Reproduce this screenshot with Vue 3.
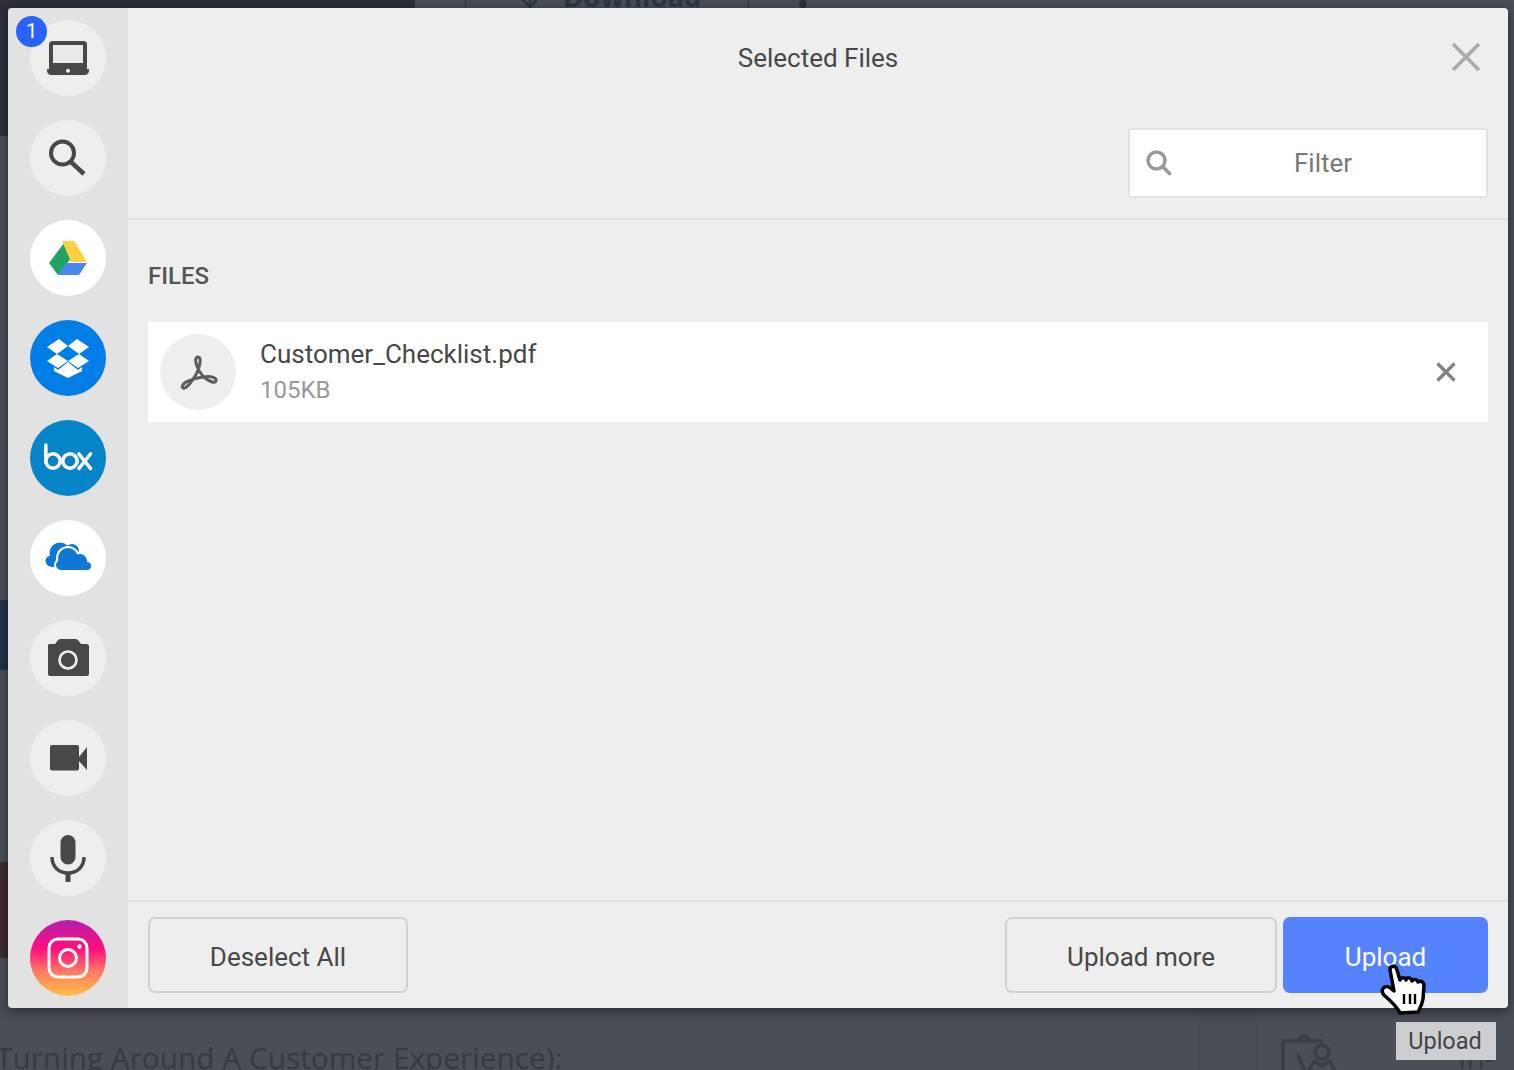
<script setup>
const file = { name: 'Customer_Checklist.pdf', size: '105KB' }
</script>

<template>
  <div class="page">
    <div class="backdrop" aria-hidden="true">
      <div class="bg-top-dark"></div>
      <div class="bg-left-mid"></div>
      <div class="bg-left-blue"></div>
      <div class="bg-left-red"></div>
      <div class="bg-panel"></div>
      <i class="bg-rule r1"></i>
      <i class="bg-rule r2"></i>
      <i class="bg-dot"></i>
      <svg class="bg-arrow" viewBox="0 0 16 8" fill="none" stroke="#2c3644" stroke-width="2.400">
        <path d="M8 0v8M1 0l7 7 7-7" />
      </svg>
      <span class="bg-download">Download</span>
      <span class="bg-headline">Turning Around A Customer Experience):</span>
      <span class="bg-incl">In-Cl</span>
      <svg class="bg-clip" viewBox="0 0 70 50" fill="none" stroke="#3a3e47" stroke-width="3.600">
        <path d="M3 40V11h40M17 23l8 18M20 9.500a4 4 0 1 1 8 0" />
        <circle cx="42" cy="22" r="7" />
        <path d="M28 42l6-11M56 42l-6-11M34 31l8 5 8-5" />
      </svg>
    </div>

    <div class="modal">
      <aside class="rail">
        <span class="badge">1</span>

        <button class="src">
          <svg viewBox="0 0 76 76">
            <rect x="19" y="21" width="38" height="30" rx="3.500" fill="#484848" />
            <rect x="23" y="25" width="30" height="18" fill="#eaeaea" />
            <path d="M17 49h42v2c0 2-2 4-4 4H21c-2 0-4-2-4-4z" fill="#484848" />
            <circle cx="38" cy="50.700" r="2" fill="#eee" />
          </svg>
        </button>

        <button class="src">
          <svg viewBox="0 0 76 76" fill="none" stroke="#484848">
            <circle cx="32.500" cy="33" r="11.500" stroke-width="4" />
            <path d="M41 42l13 12" stroke-width="4.500" />
          </svg>
        </button>

        <button class="src white">
          <svg viewBox="0 0 76 76">
            <path d="M19 43 34 23l8 14-14 18z" fill="#1ea362" />
            <path d="M32 21h12l13 21H41z" fill="#ffcf43" />
            <path d="M28 55l8-12h21l-8 12z" fill="#4a88f0" />
          </svg>
        </button>

        <button class="src dropbox">
          <svg viewBox="0 0 76 76" fill="#fff">
            <path d="M17 27 29 19 38 26 27 34z" />
            <path d="M59 27 47 19 38 26 49 34z" />
            <path d="M17 41 27 34 38 41 28 48z" />
            <path d="M59 41 49 34 38 41 48 48z" />
            <path d="M38 42 28 50 24 47v4l14 7 14-7v-4l-4 3z" />
          </svg>
        </button>

        <button class="src box">
          <svg viewBox="0 0 76 76" fill="none" stroke="#fff" stroke-width="3.600" stroke-linecap="round">
            <path d="M15.800 25v16" />
            <circle cx="23" cy="41" r="7.200" />
            <circle cx="40" cy="41" r="7.200" />
            <path d="M49 34l11.500 14.500M60.500 34 49 48.500" />
          </svg>
        </button>

        <button class="src white">
          <svg viewBox="0 0 76 76">
            <g fill="#0f78d4">
              <circle cx="30" cy="33" r="10.500" />
              <circle cx="21" cy="41" r="5.500" />
              <circle cx="42" cy="31" r="7" />
              <rect x="21" y="36" width="22" height="11" />
            </g>
            <g fill="#fff" stroke="#fff" stroke-width="4">
              <circle cx="38" cy="38" r="10" />
              <circle cx="31" cy="45" r="5" />
              <circle cx="50" cy="41" r="7" />
              <circle cx="57" cy="46" r="4" />
              <rect x="31" y="40" width="26" height="10" />
            </g>
            <g fill="#0f78d4">
              <circle cx="38" cy="38" r="10" />
              <circle cx="31" cy="45" r="5" />
              <circle cx="50" cy="41" r="7" />
              <circle cx="57" cy="46" r="4" />
              <rect x="31" y="40" width="26" height="10" />
            </g>
          </svg>
        </button>

        <button class="src">
          <svg viewBox="0 0 76 76">
            <path d="M19 24h6l3-4c1-1 2-1 3-1h14c1 0 2 0 3 1l3 4h6c1 0 2 1 2 2v28c0 1-1 2-2 2H20c-1 0-2-1-2-2V26c0-1 0-2 1-2z" fill="#484848" />
            <circle cx="38" cy="40" r="8.500" fill="none" stroke="#eee" stroke-width="2.600" />
          </svg>
        </button>

        <button class="src">
          <svg viewBox="0 0 76 76" fill="#484848">
            <rect x="20" y="25" width="29" height="25.500" rx="2" />
            <path d="M49 37l8-10v23l-8-9z" />
          </svg>
        </button>

        <button class="src">
          <svg viewBox="0 0 76 76" fill="none">
            <rect x="30.500" y="15" width="15" height="29.500" rx="7.500" fill="#484848" />
            <path d="M22 37c0 10 7 16 16 16s16-6 16-16" stroke="#484848" stroke-width="3.500" />
            <rect x="35.500" y="52" width="5" height="10" fill="#484848" />
          </svg>
        </button>

        <button class="src insta">
          <svg viewBox="0 0 76 76" fill="none" stroke="#fff">
            <rect x="19" y="19" width="38" height="38" rx="9" stroke-width="3" />
            <circle cx="38" cy="38" r="8.500" stroke-width="3" />
            <circle cx="49.500" cy="26.500" r="2.200" fill="#fff" stroke="none" />
          </svg>
        </button>
      </aside>

      <main class="panel">
        <header class="head">
          <div class="title-row">
            <span></span>
            <h1 class="title">Selected Files</h1>
            <button class="close" aria-label="Close">
              <svg viewBox="0 0 32 32" fill="none" stroke="#ababab" stroke-width="3.800">
                <path d="M3 3l26 26M29 3 3 29" />
              </svg>
            </button>
          </div>
          <div class="filter-row">
            <label class="filter">
              <svg viewBox="0 0 26 26" fill="none" stroke="#999">
                <circle cx="10.500" cy="10.500" r="8.500" stroke-width="3.400" />
                <path d="M16.500 16.500l7 7" stroke-width="3.800" stroke-linecap="round" />
              </svg>
              <span>Filter</span>
            </label>
          </div>
        </header>

        <section class="body">
          <h2 class="label">FILES</h2>
          <div class="row">
            <span class="thumb">
              <svg viewBox="0 0 76 76" fill="none" stroke="#5c5c5c" stroke-width="3" stroke-linejoin="round">
                <path d="M38 23c-2 0-3 2-2 6 1 5 5 12 9 15 4 3 10 6 11 3 1-4-6-5-12-4-8 1-14 3-18 5-3 2-5 5-3 6 2 1 5-2 8-6 4-5 8-12 9-19 .5-4 0-6-2-6z" />
              </svg>
            </span>
            <div class="meta">
              <div class="name">{{ file.name }}</div>
              <div class="size">{{ file.size }}</div>
            </div>
            <button class="remove" aria-label="Remove">
              <svg viewBox="0 0 20 20" fill="none" stroke="#808080" stroke-width="3.200">
                <path d="M1.500 1.500l17 17M18.500 1.500l-17 17" />
              </svg>
            </button>
          </div>
        </section>

        <footer class="foot">
          <button class="btn deselect">Deselect All</button>
          <div class="actions">
            <button class="btn more">Upload more</button>
            <button class="btn primary">Upload</button>
          </div>
        </footer>
      </main>
    </div>

    <svg class="hand" viewBox="0 0 47 52" aria-hidden="true">
      <path d="M11 6C11 1 17 1 18 6L21 16C22 13 26 13 27 16C28 13 32 13 33 17C34 15 38 15 39 18C42 16 45 18 45 22L44 35C43 41 41 44 39 48L21 49C19 44 13 38 5 31C1 26 5 21 10 23L15 27Z" fill="#fff" stroke="#000" stroke-width="3.500" stroke-linejoin="round" />
      <path d="M25 30v10M31 30v10M36 30v10" stroke="#000" stroke-width="2.400" />
    </svg>
    <div class="tip">Upload</div>
  </div>
</template>

<style scoped>
.page {
  position: relative;
  width: 1514px;
  height: 1070px;
  overflow: hidden;
  background: #494e57;
  font-family: Roboto, "Liberation Sans", sans-serif;
  color: #484848;
}
.backdrop > * { position: absolute; }
.bg-top-dark { left: 0; top: 0; width: 415px; height: 8px; background: #2d2f39; }
.bg-left-mid { left: 0; top: 0; width: 8px; height: 136px; background: #2d2f39; }
.bg-left-blue { left: 0; top: 600px; width: 8px; height: 70px; background: #1f3446; }
.bg-left-red { left: 0; top: 862px; width: 8px; height: 96px; background: #3e2c31; }
.bg-panel { left: 1197px; top: 1008px; width: 61px; height: 62px; background: #474b54; }
.bg-rule { top: 0; width: 1px; height: 8px; background: #30343d; }
.r1 { left: 465px; }
.r2 { left: 748px; }
.bg-dot { left: 799px; top: 0; width: 8px; height: 8px; border-radius: 50%; background: #2a2e37; }
.bg-arrow { left: 522px; top: 0; width: 16px; height: 8px; }
.bg-download {
  left: 563px; top: -22px;
  font: 700 27.500px/38px "Open Sans", sans-serif;
  color: #2c3644;
}
.bg-headline {
  left: -4px; top: 1037px;
  font: 400 29.800px "Open Sans", sans-serif;
  white-space: nowrap;
  color: #363a43;
}
.bg-incl {
  left: 1458px; top: 1037px;
  font: 400 30px "Open Sans", sans-serif;
  color: #363a43;
}
.bg-clip { left: 1280px; top: 1030px; width: 70px; height: 50px; }

.modal {
  position: relative;
  display: flex;
  width: 1500px;
  height: 1000px;
  margin: 8px;
  border-radius: 4px;
  overflow: hidden;
  box-shadow: 0 3px 12px rgba(0, 0, 0, 0.45);
}
.rail {
  position: relative;
  flex: none;
  width: 120px;
  box-sizing: border-box;
  padding: 12px 22px 0;
  background: #e2e2e2;
  display: flex;
  flex-direction: column;
  gap: 24px;
}
.badge {
  position: absolute;
  left: 8px;
  top: 8px;
  z-index: 1;
  width: 31px;
  height: 31px;
  border-radius: 50%;
  background: #2962ff;
  color: #fff;
  font-size: 20px;
  line-height: 31px;
  text-align: center;
}
.src {
  flex: none;
  width: 76px;
  height: 76px;
  padding: 0;
  border: 0;
  border-radius: 50%;
  background: #eee;
  overflow: hidden;
}
.src svg { display: block; width: 76px; height: 76px; }
.white { background: #fff; }
.dropbox { background: #007ee5; }
.box { background: #0584c7; }
.insta {
  background: linear-gradient(180deg, #b31fae 0%, #ff0f7b 38%, #ff7a63 68%, #ffbf47 100%);
}

.panel {
  flex: 1;
  min-width: 0;
  display: flex;
  flex-direction: column;
  background: #eee;
}
.head {
  flex: none;
  padding: 20px 20px 20px;
  border-bottom: 2px solid #e0e0e0;
}
.title-row {
  display: grid;
  grid-template-columns: 1fr auto 1fr;
  align-items: center;
  height: 60px;
}
.title {
  margin: 0;
  font-size: 26px;
  font-weight: 400;
  color: #484848;
}
.close {
  justify-self: end;
  width: 32px;
  height: 32px;
  margin: -2px 6px 0 0;
  padding: 0;
  border: 0;
  background: none;
}
.close svg { display: block; width: 32px; height: 32px; }
.filter-row {
  display: flex;
  justify-content: flex-end;
  margin-top: 40px;
}
.filter {
  display: flex;
  align-items: center;
  box-sizing: border-box;
  width: 360px;
  height: 70px;
  padding: 0 12px 0 16px;
  background: #fff;
  border: 2px solid #e3e3e3;
  border-radius: 3px;
  font-size: 26px;
  color: #777;
}
.filter svg { flex: none; width: 26px; height: 26px; }
.filter span { flex: 1; text-align: center; }

.body {
  flex: 1;
  padding: 36px 20px 0;
}
.label {
  margin: 0 0 26px;
  font-size: 24px;
  line-height: 40px;
  font-weight: 500;
  color: #555;
}
.row {
  display: flex;
  align-items: center;
  height: 100px;
  padding: 0 22px 0 12px;
  background: #fff;
}
.thumb {
  flex: none;
  width: 76px;
  height: 76px;
  border-radius: 50%;
  background: #eee;
}
.thumb svg { display: block; width: 76px; height: 76px; }
.meta { flex: 1; margin-left: 24px; }
.name { font-size: 26px; line-height: 36px; color: #484848; }
.size { font-size: 24px; line-height: 36px; color: #999; }
.remove {
  flex: none;
  width: 40px;
  height: 40px;
  padding: 10px;
  border: 0;
  background: none;
}
.remove svg { display: block; width: 20px; height: 20px; }

.foot {
  flex: none;
  display: flex;
  justify-content: space-between;
  padding: 15px 20px;
  border-top: 2px solid #e0e0e0;
}
.actions { display: flex; gap: 6px; }
.btn {
  box-sizing: border-box;
  height: 76px;
  padding: 4px 0 0;
  border: 2px solid #d2d2d2;
  border-radius: 7px;
  background: #eee;
  color: #484848;
  font-family: inherit;
  font-size: 26px;
}
.deselect { width: 260px; }
.more { width: 272px; }
.primary {
  width: 205px;
  border-color: #5583ff;
  background: #5583ff;
  color: #fff;
}

.hand {
  position: absolute;
  left: 1379px;
  top: 964px;
  width: 47px;
  height: 52px;
}
.tip {
  position: absolute;
  left: 1396px;
  top: 1022px;
  box-sizing: border-box;
  width: 100px;
  height: 38px;
  padding-right: 2px;
  background: #cdced2;
  color: #444;
  font-size: 23.500px;
  line-height: 38px;
  text-align: center;
}
</style>
